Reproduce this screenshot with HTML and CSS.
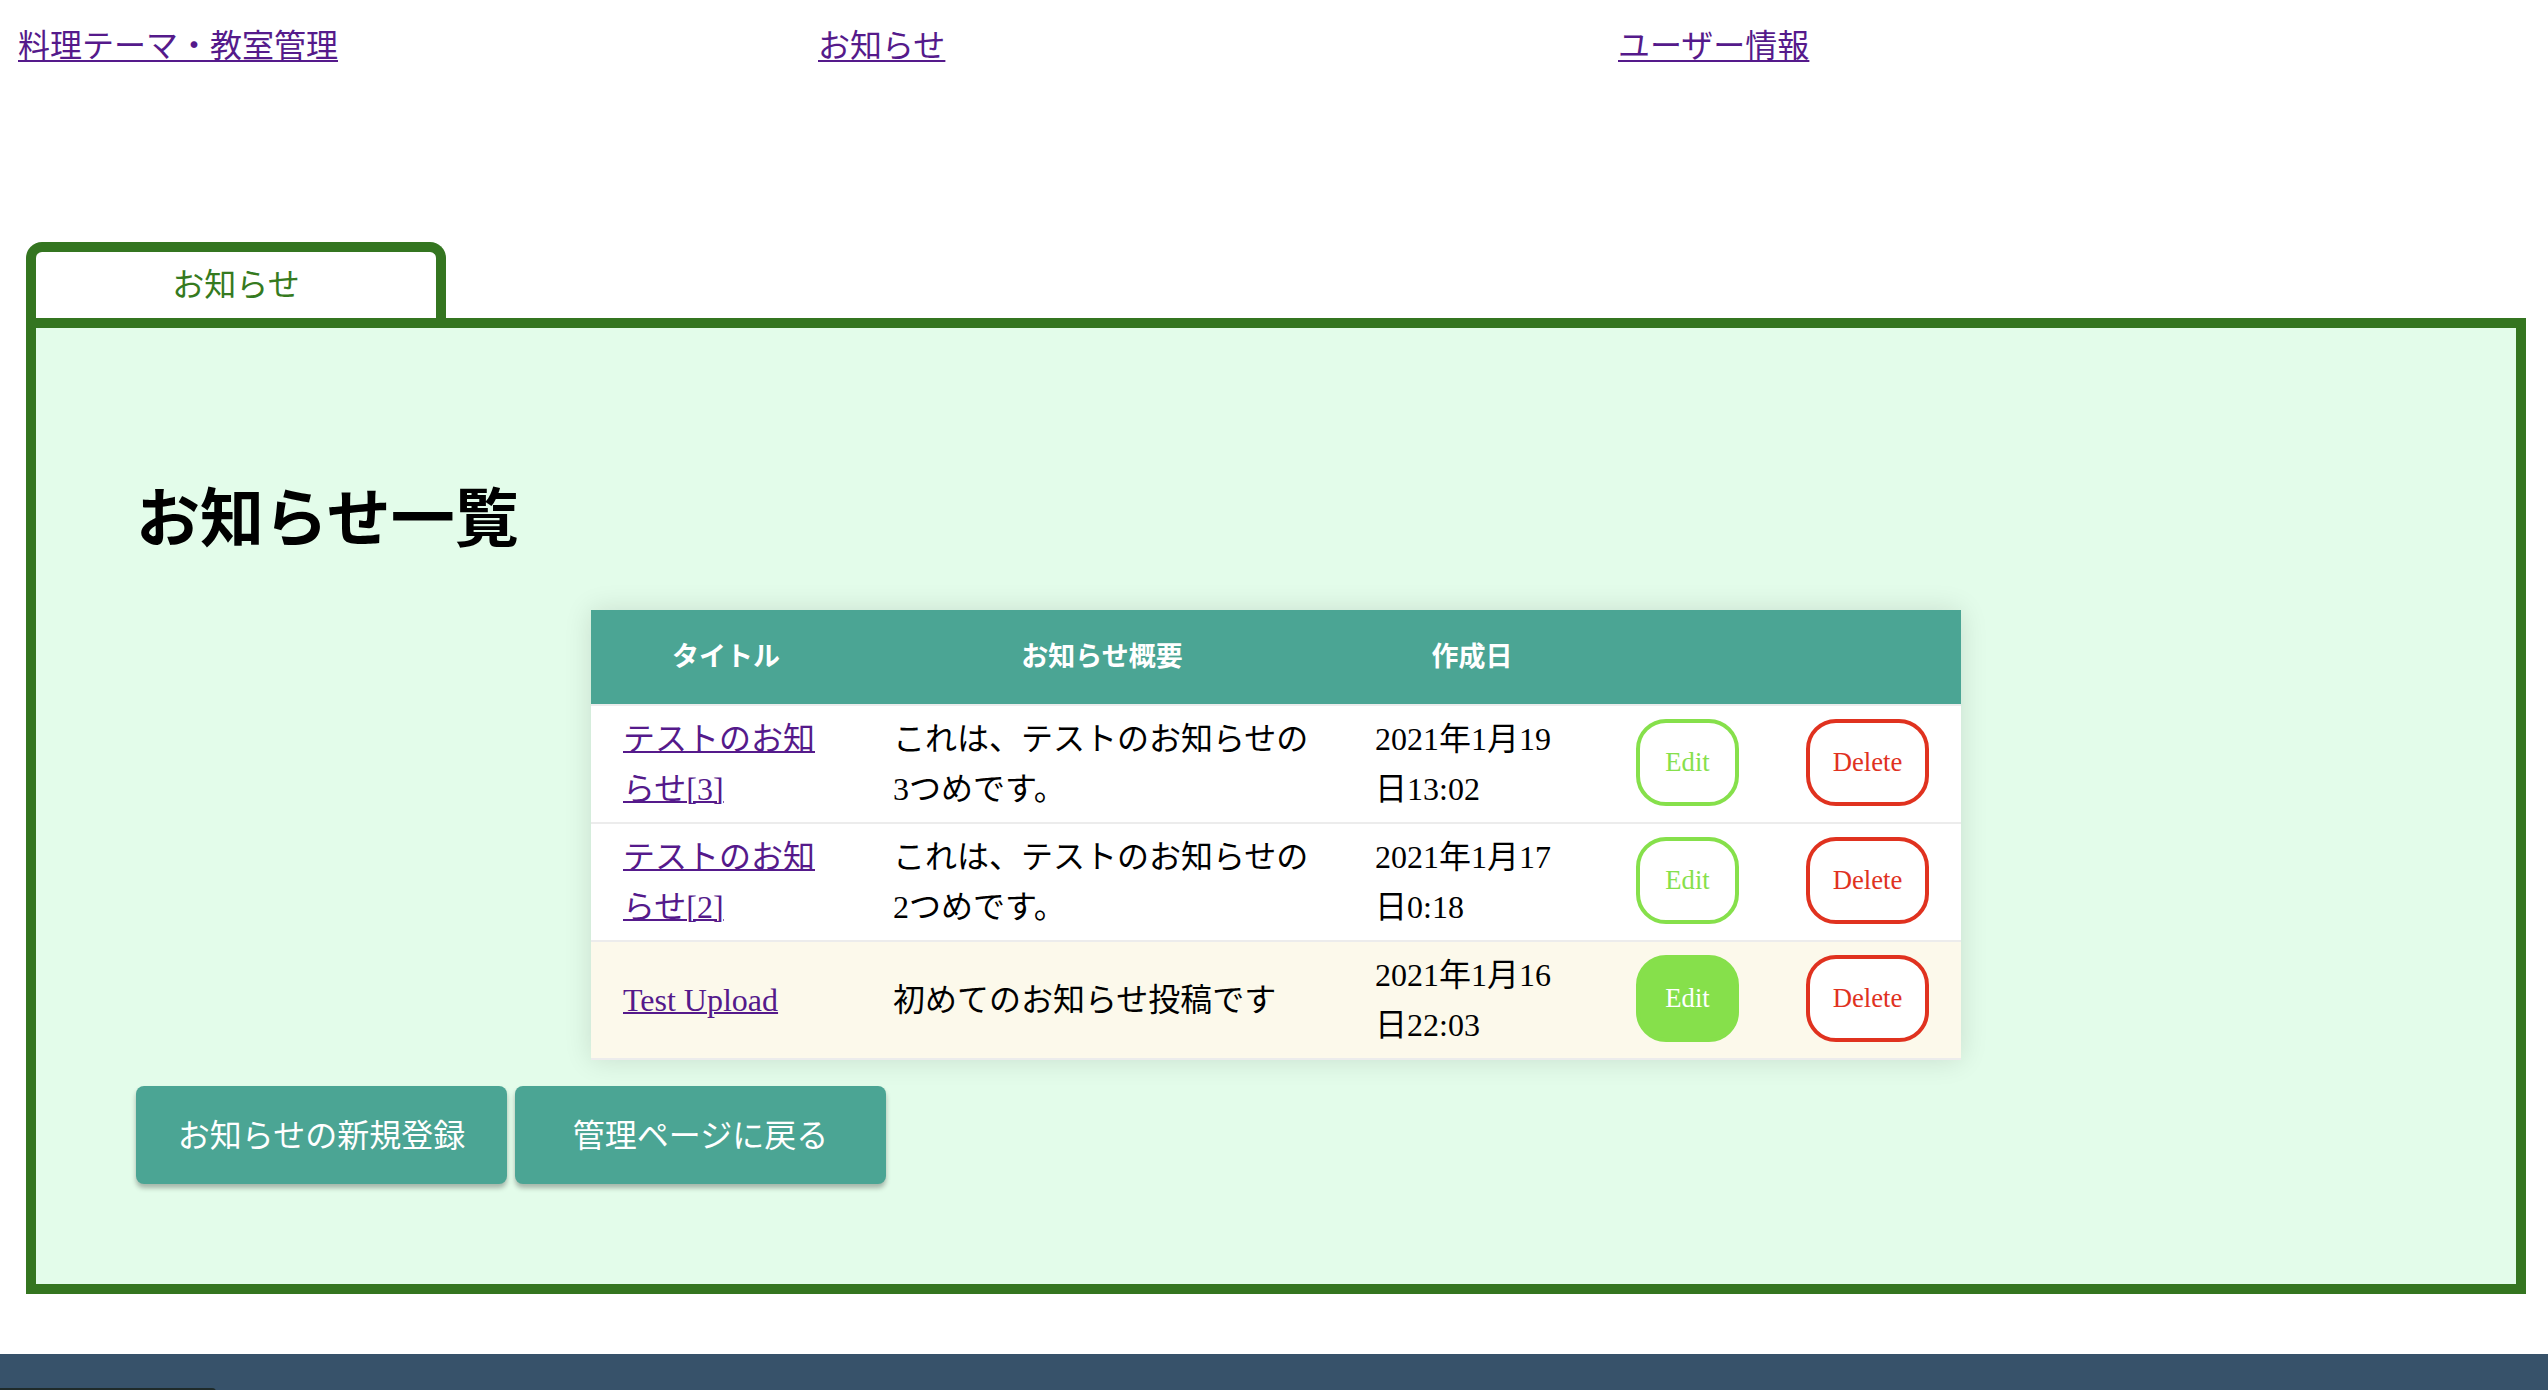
FILE: index.html
```html
<!DOCTYPE html>
<html lang="ja">
<head>
<meta charset="utf-8">
<title>お知らせ一覧</title>
<link rel="stylesheet" href="styles.css">
</head>
<body>
<div class="page">
  <nav class="global-nav">
    <div class="nav-item"><a class="nav-link" href="#">料理テーマ・教室管理</a></div>
    <div class="nav-item"><a class="nav-link" href="#">お知らせ</a></div>
    <div class="nav-item"><a class="nav-link" href="#">ユーザー情報</a></div>
  </nav>

  <main class="panel">
    <div class="tabs">
      <div class="tab">お知らせ</div>
    </div>
    <section class="panel-body">
      <h1 class="page-title">お知らせ一覧</h1>
      <table class="news-table">
        <colgroup>
          <col class="col-title">
          <col class="col-summary">
          <col class="col-date">
          <col class="col-edit">
          <col class="col-delete">
        </colgroup>
        <thead>
          <tr>
            <th>タイトル</th>
            <th>お知らせ概要</th>
            <th>作成日</th>
            <th></th>
            <th></th>
          </tr>
        </thead>
        <tbody>
          <tr>
            <td><a class="title-link" href="#">テストのお知らせ[3]</a></td>
            <td>これは、テストのお知らせの3つめです。</td>
            <td>2021年1月19日13:02</td>
            <td class="btn-cell"><button class="btn-edit" type="button">Edit</button></td>
            <td class="btn-cell"><button class="btn-delete" type="button">Delete</button></td>
          </tr>
          <tr>
            <td><a class="title-link" href="#">テストのお知らせ[2]</a></td>
            <td>これは、テストのお知らせの2つめです。</td>
            <td>2021年1月17日0:18</td>
            <td class="btn-cell"><button class="btn-edit" type="button">Edit</button></td>
            <td class="btn-cell"><button class="btn-delete" type="button">Delete</button></td>
          </tr>
          <tr class="row-active">
            <td><a class="title-link" href="#">Test Upload</a></td>
            <td>初めてのお知らせ投稿です</td>
            <td>2021年1月16日22:03</td>
            <td class="btn-cell"><button class="btn-edit is-hover" type="button">Edit</button></td>
            <td class="btn-cell"><button class="btn-delete" type="button">Delete</button></td>
          </tr>
        </tbody>
      </table>
      <div class="actions">
        <a class="action-btn" href="#">お知らせの新規登録</a>
        <a class="action-btn" href="#">管理ページに戻る</a>
      </div>
    </section>
  </main>
</div>
<footer class="site-footer">
  <div class="footer-strip"></div>
</footer>
</body>
</html>
```

FILE: styles.css
```css
html, body {
  margin: 0;
  padding: 0;
  background: #ffffff;
}

body {
  font-family: "Liberation Serif", "Noto Sans CJK JP", serif;
  font-size: 32px;
  color: #000000;
}

.page {
  padding: 16px 16px 0 16px;
}

.global-nav {
  display: flex;
  height: 226px;
  padding-top: 7px;
  padding-left: 2px;
  box-sizing: border-box;
}

.nav-item {
  width: 800px;
  line-height: 46px;
}

.nav-link {
  color: #551a8b;
  text-decoration: underline;
  text-decoration-thickness: 2px;
  text-underline-offset: 3px;
}

.panel {
  margin-left: 10px;
  width: 2500px;
}

.tabs {
  display: flex;
}

.tab {
  width: 420px;
  height: 76px;
  box-sizing: border-box;
  border: 10px solid #347520;
  border-bottom: none;
  border-radius: 16px 16px 0 0;
  background: #ffffff;
  color: #357a20;
  display: flex;
  align-items: center;
  justify-content: center;
  padding-bottom: 6px;
  font-size: 32px;
}

.panel-body {
  border: 10px solid #347520;
  background: #e3fcea;
  padding: 100px;
}

.page-title {
  margin: 43px 0 44px 0;
  font-size: 64px;
  line-height: 92px;
  font-weight: bold;
  padding-top: 3px;
}

.news-table {
  width: 1370px;
  margin: 0 auto;
  table-layout: fixed;
  border-collapse: separate;
  border-spacing: 0;
  background: #ffffff;
  box-shadow: 0 0 26px rgba(0, 0, 0, 0.12);
}

.col-title { width: 270px; }
.col-summary { width: 482px; }
.col-date { width: 258px; }
.col-edit { width: 173px; }
.col-delete { width: 187px; }

.news-table th {
  background: #4ba594;
  color: #ffffff;
  font-weight: bold;
  font-size: 27px;
  line-height: 94px;
  padding: 0;
  text-align: center;
  border-bottom: 2px solid #ececec;
}

.news-table td {
  padding: 8px 32px;
  line-height: 50px;
  font-size: 32px;
  vertical-align: middle;
  border-bottom: 2px solid #ececec;
  text-align: left;
}

.news-table td.btn-cell {
  padding: 8px 0;
  text-align: center;
}

.row-active td {
  background: #fcf9eb;
}

.title-link {
  color: #551a8b;
  text-decoration: underline;
  text-decoration-thickness: 2px;
}

.btn-edit,
.btn-delete {
  display: block;
  margin: 0 auto 3px auto;
  font-family: "Liberation Serif", serif;
  font-size: 26.67px;
  line-height: 31px;
  padding: 24px 25px;
  border-width: 4px;
  border-style: solid;
  border-radius: 30px;
  background: #ffffff;
  cursor: pointer;
}

.btn-edit {
  color: #86e04b;
  border-color: #86e04b;
}

.btn-edit.is-hover {
  background: #86e04b;
  color: #ffffff;
}

.btn-delete {
  padding: 24px 23px;
  color: #e0321f;
  border-color: #e0321f;
}

.actions {
  display: flex;
  gap: 8px;
  margin-top: 26px;
}

.action-btn {
  width: 371px;
  height: 98px;
  box-sizing: border-box;
  display: flex;
  align-items: center;
  justify-content: center;
  background: #4ba594;
  color: #ffffff;
  text-decoration: none;
  border-radius: 8px;
  font-size: 32px;
  padding-bottom: 4px;
  box-shadow: 0 4px 5px rgba(0, 0, 0, 0.28);
}

.site-footer {
  margin-top: 60px;
  height: 120px;
  background: #37526a;
  padding-top: 34px;
  box-sizing: border-box;
}

.footer-strip {
  width: 216px;
  height: 20px;
  background: #1f2b2a;
  border-radius: 0 4px 0 0;
}
```
